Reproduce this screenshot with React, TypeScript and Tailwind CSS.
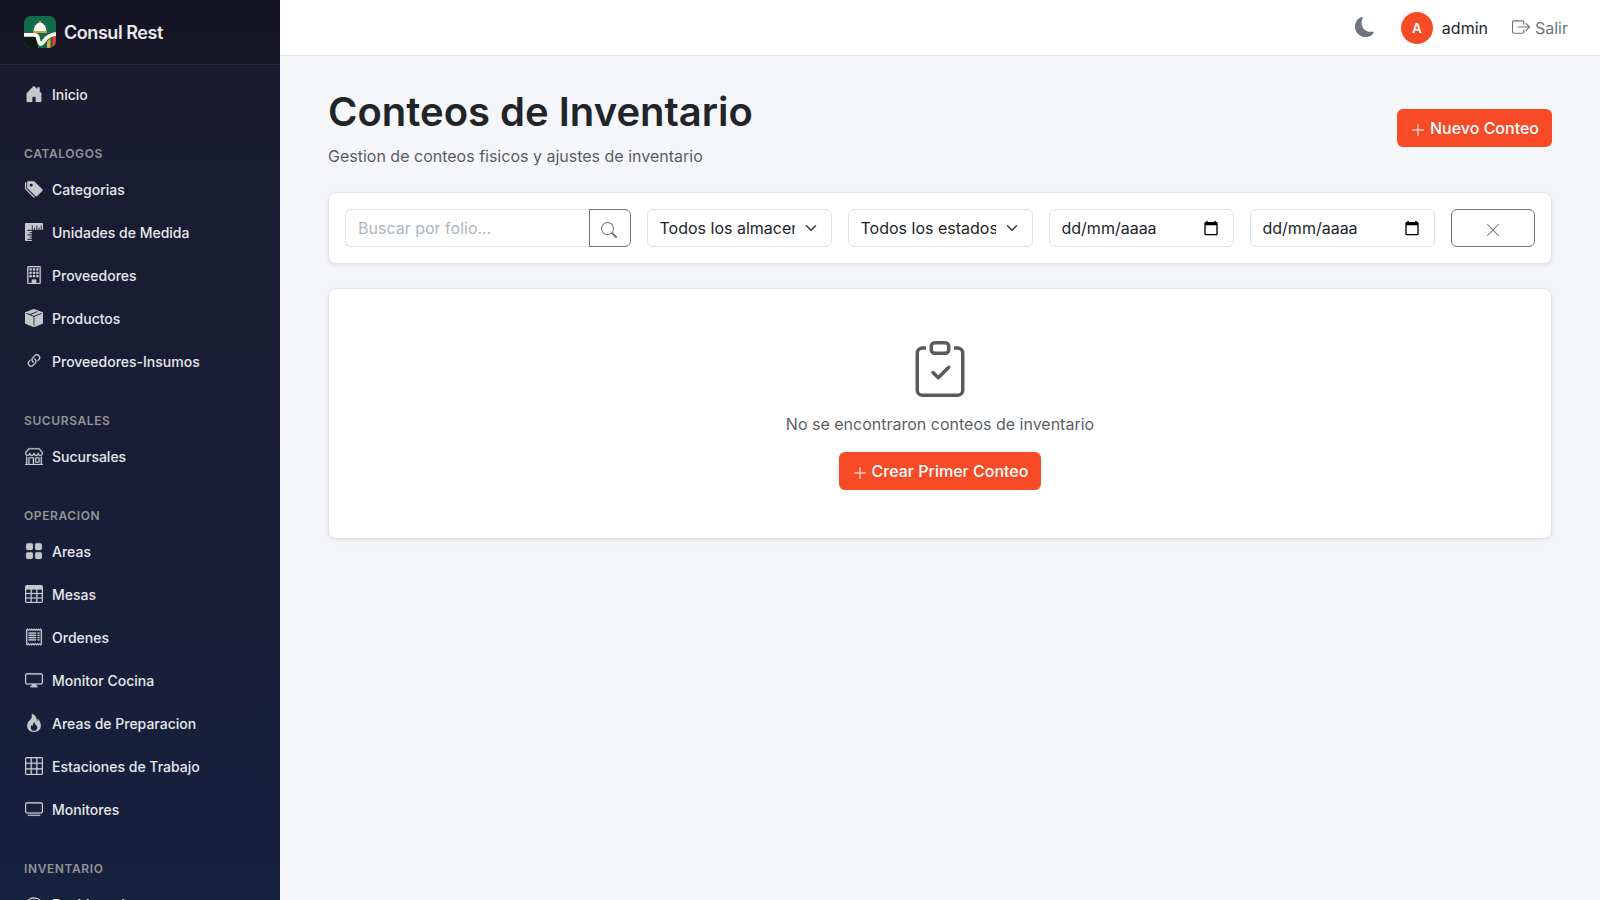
import React from "react";
import type { IconType } from "react-icons";
import {
  BsBoxArrowRight,
  BsBoxSeamFill,
  BsBuilding,
  BsClipboardCheck,
  BsDisplay,
  BsFire,
  BsGrid3X3,
  BsGridFill,
  BsHouseDoorFill,
  BsLink45Deg,
  BsMoonFill,
  BsPlusLg,
  BsReceipt,
  BsRulers,
  BsSearch,
  BsShop,
  BsSpeedometer2,
  BsTable,
  BsTagsFill,
  BsTv,
  BsXLg,
} from "react-icons/bs";

type NavItem = {
  label: string;
  icon: IconType;
};

type NavSection = {
  title?: string;
  items: NavItem[];
};

const sections: NavSection[] = [
  { items: [{ label: "Inicio", icon: BsHouseDoorFill }] },
  {
    title: "Catalogos",
    items: [
      { label: "Categorias", icon: BsTagsFill },
      { label: "Unidades de Medida", icon: BsRulers },
      { label: "Proveedores", icon: BsBuilding },
      { label: "Productos", icon: BsBoxSeamFill },
      { label: "Proveedores-Insumos", icon: BsLink45Deg },
    ],
  },
  {
    title: "Sucursales",
    items: [{ label: "Sucursales", icon: BsShop }],
  },
  {
    title: "Operacion",
    items: [
      { label: "Areas", icon: BsGridFill },
      { label: "Mesas", icon: BsTable },
      { label: "Ordenes", icon: BsReceipt },
      { label: "Monitor Cocina", icon: BsDisplay },
      { label: "Areas de Preparacion", icon: BsFire },
      { label: "Estaciones de Trabajo", icon: BsGrid3X3 },
      { label: "Monitores", icon: BsTv },
    ],
  },
  {
    title: "Inventario",
    items: [{ label: "Dashboard", icon: BsSpeedometer2 }],
  },
];

function Logo() {
  return (
    <svg viewBox="0 0 32 32" className="size-8 rounded-[7px]">
      <rect width="32" height="32" fill="#126b4c" />
      <path d="M0 20h12l2 12H0z" fill="#111917" />
      <path d="M23 25.500l3.500-3.500v10H23z" fill="#e0a744" />
      <path d="M28.500 21l3.500-2v10l-3.500 2z" fill="#d8432f" />
      <circle cx="16" cy="6.3" r="1.3" fill="#e0a744" />
      <path d="M9.5 15.2a6.5 8.5 0 0 1 13 0z" fill="#fdf9ef" />
      <rect x="9" y="15.2" width="14" height="1.7" fill="#e0a744" />
      <path
        d="M0 18.8h10.500c2.700 0 3 1.300 3.700 4.400.7 3.300 1.200 5 2.400 5s2.400-1.900 4.400-4.600S26 19 32 17.800"
        fill="none"
        stroke="#fdf9ef"
        strokeWidth="3.800"
      />
    </svg>
  );
}

function Sidebar() {
  return (
    <aside className="w-[280px] h-full shrink-0 overflow-hidden bg-linear-to-b from-[#1a1a2e] to-[#16213e]">
      <div className="h-[65px] flex items-center gap-2 px-6 bg-black/20 border-b border-white/10">
        <Logo />
        <span className="pt-px text-lg font-semibold tracking-[-0.45px] text-white/90">
          Consul Rest
        </span>
      </div>
      <nav className="pt-2">
        {sections.map((section, index) => (
          <div key={index}>
            {section.title && (
              <h6 className="h-[52px] pt-[29px] px-6 text-xs leading-[18px] font-semibold uppercase tracking-[0.6px] text-[#949494]">
                {section.title}
              </h6>
            )}
            {section.items.map(({ label, icon: Icon }) => (
              <a
                key={label}
                className="h-[43px] flex items-center gap-[9px] px-[25px] text-sm font-medium text-white/90"
              >
                <Icon className="size-[18px] -mt-px text-white/75 stroke-[0.2]" />
                {label}
              </a>
            ))}
          </div>
        ))}
      </nav>
    </aside>
  );
}

function Topbar() {
  return (
    <header className="h-14 flex items-center justify-end pr-8 bg-white border-b border-[#dee2e6]">
      <BsMoonFill className="size-5 mr-[26px] mb-0.5 text-[#6c757d]" />
      <div className="size-8 mr-[9px] pt-px flex items-center justify-center rounded-full bg-[#f74b28] text-white text-[13.6px] font-semibold">
        A
      </div>
      <span className="mr-6">admin</span>
      <a className="flex items-center gap-[5px] text-[#6c757d]">
        <BsBoxArrowRight className="size-[18px] -mt-0.5" />
        Salir
      </a>
    </header>
  );
}

function PrimaryButton({ children }: { children: React.ReactNode }) {
  return (
    <button className="h-[38px] inline-flex items-center gap-1 px-[13px] rounded-md bg-[#f74b28] text-white font-medium">
      <BsPlusLg className="size-4 mt-1" />
      {children}
    </button>
  );
}

function FilterSelect({ label }: { label: string }) {
  return (
    <div className="col-span-2 relative">
      <select className="w-full h-[38px] pl-3 pr-9 appearance-none rounded-md border border-[#dee2e6] bg-white">
        <option>{label}</option>
      </select>
      <svg
        viewBox="0 0 16 16"
        className="absolute right-[13px] top-[13px] w-4 h-3"
        fill="none"
        stroke="#343a40"
        strokeWidth="2"
        strokeLinecap="round"
        strokeLinejoin="round"
      >
        <path d="m2 5 6 6 6-6" />
      </svg>
    </div>
  );
}

function DateField() {
  return (
    <div className="col-span-2 h-[38px] flex items-center justify-between pl-3 pr-[14px] rounded-md border border-[#dee2e6] bg-white">
      <span>dd/mm/aaaa</span>
      <svg viewBox="0 0 24 24" className="size-4" fill="black">
        <path d="M20 3h-1V1h-2v2H7V1H5v2H4c-1.1 0-2 .9-2 2v16c0 1.1.9 2 2 2h16c1.1 0 2-.9 2-2V5c0-1.1-.9-2-2-2zm0 18H4V8h16v13z" />
      </svg>
    </div>
  );
}

export default function App() {
  return (
    <div className="h-screen flex overflow-hidden bg-[#f4f6fa] text-[#212529] text-base font-['Inter',sans-serif]">
      <Sidebar />
      <div className="flex-1 min-w-0">
        <Topbar />
        <main className="px-12 py-8">
          <div className="flex items-center justify-between mb-6">
            <div>
              <h1 className="mb-2 text-[40px] leading-[48px] font-semibold">
                Conteos de Inventario
              </h1>
              <p className="text-[#212529]/75">
                Gestion de conteos fisicos y ajustes de inventario
              </p>
            </div>
            <PrimaryButton>Nuevo Conteo</PrimaryButton>
          </div>

          <div className="grid grid-cols-12 gap-4 p-4 mb-6 rounded-lg border border-[#dee2e6] bg-white shadow-[0_2px_4px_rgba(0,0,0,0.075)]">
            <div className="col-span-3 flex">
              <input
                type="text"
                placeholder="Buscar por folio..."
                className="flex-1 min-w-0 h-[38px] px-3 rounded-l-md border border-r-0 border-[#dee2e6] outline-none placeholder:text-[#adb5bd]"
              />
              <button className="w-[42px] h-[38px] pr-px flex items-center justify-center rounded-r-md border border-[#6c757d] text-[#6c757d]">
                <BsSearch className="size-4 mt-1" />
              </button>
            </div>
            <FilterSelect label="Todos los almacenes" />
            <FilterSelect label="Todos los estados" />
            <DateField />
            <DateField />
            <button className="h-[38px] flex items-center justify-center rounded-md border border-[#6c757d] text-[#6c757d]">
              <BsXLg className="size-4 mt-1" />
            </button>
          </div>

          <div className="flex flex-col items-center h-[251px] pt-[52px] rounded-lg border border-[#dee2e6] bg-white shadow-[0_2px_4px_rgba(0,0,0,0.075)]">
            <BsClipboardCheck className="size-14 mb-[15px] text-[#585c5f]" />
            <p className="mb-4 text-[#212529]/75">
              No se encontraron conteos de inventario
            </p>
            <PrimaryButton>Crear Primer Conteo</PrimaryButton>
          </div>
        </main>
      </div>
    </div>
  );
}
